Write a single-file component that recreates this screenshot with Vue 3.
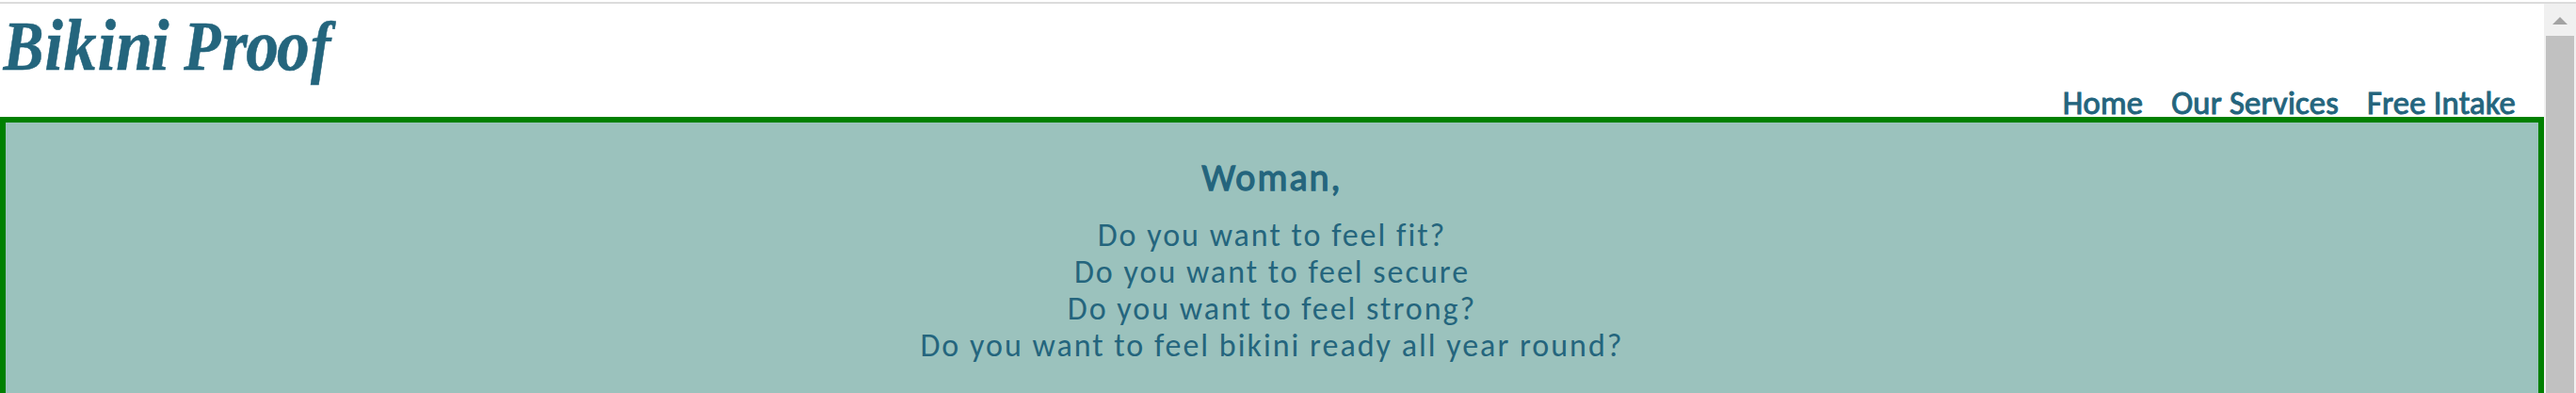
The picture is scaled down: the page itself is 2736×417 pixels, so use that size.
<script setup>
const links = ['Home', 'Our Services', 'Free Intake']
const lines = [
  'Do you want to feel fit?',
  'Do you want to feel secure',
  'Do you want to feel strong?',
  'Do you want to feel bikini ready all year round?',
]
</script>

<template>
  <div class="window">
    <div class="rule"></div>
    <div class="view">
      <div class="page">
        <header>
          <svg class="logo" width="370" height="100">
            <text transform="scale(.88 1)" y="70"><tspan class="cap" x="4">B</tspan><tspan x="54 77 118 140 182">ikini</tspan><tspan class="cap" x="222">P</tspan><tspan x="268 297 334">roo</tspan><tspan class="tail" x="375">f</tspan></text>
          </svg>
          <nav><a v-for="l in links" :key="l">{{ l }}</a></nav>
        </header>
        <main>
          <h2>Woman,</h2>
          <p v-for="l in lines" :key="l">{{ l }}</p>
        </main>
      </div>
      <div class="scrollbar">
        <svg class="arrow" width="32" height="34"><path d="M8 22L16 14L24 22Z" fill="#a3a3a3" /></svg>
        <div class="thumb"></div>
      </div>
    </div>
  </div>
</template>

<style>
body { overflow: hidden; }
</style>

<style scoped>
.window { box-sizing: border-box; height: 417px; padding-top: 2px; display: flex; flex-direction: column; font-family: Carlito, Lato, sans-serif; color: #24657d; background: #fff; overflow: hidden; }
.rule { height: 2px; flex: none; background: #dcdcdc; }
.view { flex: 1; display: flex; }
.page { flex: 1; display: flex; flex-direction: column; }
header { height: 120px; display: flex; justify-content: space-between; align-items: flex-start; }
.logo { overflow: visible; fill: #24657d; stroke: #24657d; stroke-width: 0.6px; font: italic bold 79px "Liberation Serif", serif; }
.cap { font-size: 73px; }
.tail { font-size: 73px; }
nav { display: flex; gap: 30px; padding: 86px 30px 0 0; font-size: 34.6px; line-height: 38px; letter-spacing: 0.2px; -webkit-text-stroke: 1px #24657d; }
main { flex: 1; box-sizing: border-box; border: 6px solid green; border-bottom: 0; background: #9bc2bd; padding-top: 38px; text-align: center; letter-spacing: 2px; }
h2 { margin: 0 0 20px; font-size: 40px; line-height: 42px; font-weight: normal; -webkit-text-stroke: 1.3px #24657d; }
p { margin: 0; font-size: 34px; line-height: 39px; }
.scrollbar { width: 34px; background: #f0f0f0; display: flex; flex-direction: column; align-items: center; }
.arrow { display: block; flex: none; }
.thumb { width: 30px; flex: 1; background: #c1c1c1; }
</style>
